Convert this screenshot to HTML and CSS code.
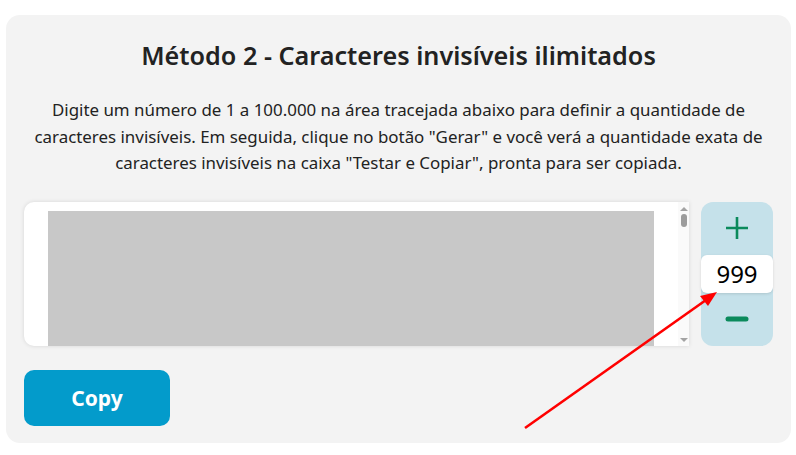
FILE: index.html
```html
<!DOCTYPE html>
<html lang="pt-BR">
<head>
  <meta charset="UTF-8" />
  <meta name="viewport" content="width=device-width, initial-scale=1.0"/>
  <title>Caracteres invisíveis</title>
  <link rel="stylesheet" href="styles.css">
</head>
<body>
  <div class="card">
    <h1>Método 2 - Caracteres invisíveis ilimitados</h1>
    <p class="intro">Digite um número de 1 a 100.000 na área tracejada abaixo para definir a quantidade de caracteres invisíveis. Em seguida, clique no botão "Gerar" e você verá a quantidade exata de caracteres invisíveis na caixa "Testar e Copiar", pronta para ser copiada.</p>

    <div class="tool">
      <!-- caixa de saída -->
      <div class="output">
        <div class="fill"></div>
        <div class="scroll">
          <span class="arrow-up"></span>
          <span class="thumb"></span>
          <span class="arrow-down"></span>
        </div>
      </div>

      <!-- contador -->
      <div class="counter">
        <button class="step">
          <svg width="24" height="24" viewBox="0 0 24 24"><path d="M12 1v22M1 12h22" stroke="#0b8a5c" stroke-width="2.6" fill="none"/></svg>
        </button>
        <div class="count">999</div>
        <button class="step">
          <svg width="24" height="24" viewBox="0 0 24 24"><path d="M3 12h18" stroke="#0b8a5c" stroke-width="5" stroke-linecap="round" fill="none"/></svg>
        </button>
      </div>
    </div>

    <button class="copy">Copy</button>
  </div>

  <svg class="pointer" width="796" height="455" viewBox="0 0 796 455">
    <line x1="525" y1="428" x2="706" y2="300" stroke="#ff0000" stroke-width="2.6"/>
    <polygon points="717,292 700,296 708,306" fill="#ff0000"/>
  </svg>
</body>
</html>
```

FILE: styles.css
```css
body { margin: 0; background: #fff; font-family: "Noto Sans", sans-serif; color: #222; }
.card { position: relative; margin: 15px 5px 0 6px; background: #f3f3f3; border-radius: 14px; padding: 24px 18px 17px; }
h1 { margin: 0; font-size: 25.2px; font-weight: 600; line-height: 32px; text-align: center; color: #222; }
.intro { margin: 26px 0 0; font-size: 16.9px; line-height: 26.5px; text-align: center; color: #222; }

.tool { display: flex; gap: 12px; margin-top: 25px; height: 144px; }
.output { flex: 1; display: flex; background: #fff; border-radius: 10px 0 0 10px; box-shadow: 0 0 4px rgba(0,0,0,0.12); overflow: hidden; padding: 9px 0 0 24px; }
.fill { width: 606px; background: #c8c8c8; }
.scroll { margin-left: auto; width: 11px; margin-top: -9px; display: flex; flex-direction: column; align-items: center; background: #fafafa; }
.arrow-up { margin-top: 5px; border: 4px solid transparent; border-top: 0; border-bottom: 4px solid #a3a3a3; }
.thumb { width: 6px; height: 13px; margin-top: 3px; background: #9c9c9c; border-radius: 3px; }
.arrow-down { margin-top: auto; margin-bottom: 4px; border: 4px solid transparent; border-bottom: 0; border-top: 4px solid #a3a3a3; }

.counter { width: 72px; display: flex; flex-direction: column; justify-content: space-between; background: #c5e1ea; border-radius: 12px; }
.step { flex: 1; border: none; background: none; padding: 0; display: flex; align-items: center; justify-content: center; }
.count { height: 38px; display: flex; align-items: center; justify-content: center; background: #fff; border-radius: 6px; box-shadow: 0 1px 3px rgba(0,0,0,0.12); font-size: 24px; color: #000; }

.copy { margin-top: 24px; width: 146px; height: 56px; border: none; border-radius: 10px; background: #039bcb; color: #fff; font-family: "Noto Sans", sans-serif; font-size: 21px; font-weight: 700; }

.pointer { position: absolute; top: 0; left: 0; pointer-events: none; }
```
